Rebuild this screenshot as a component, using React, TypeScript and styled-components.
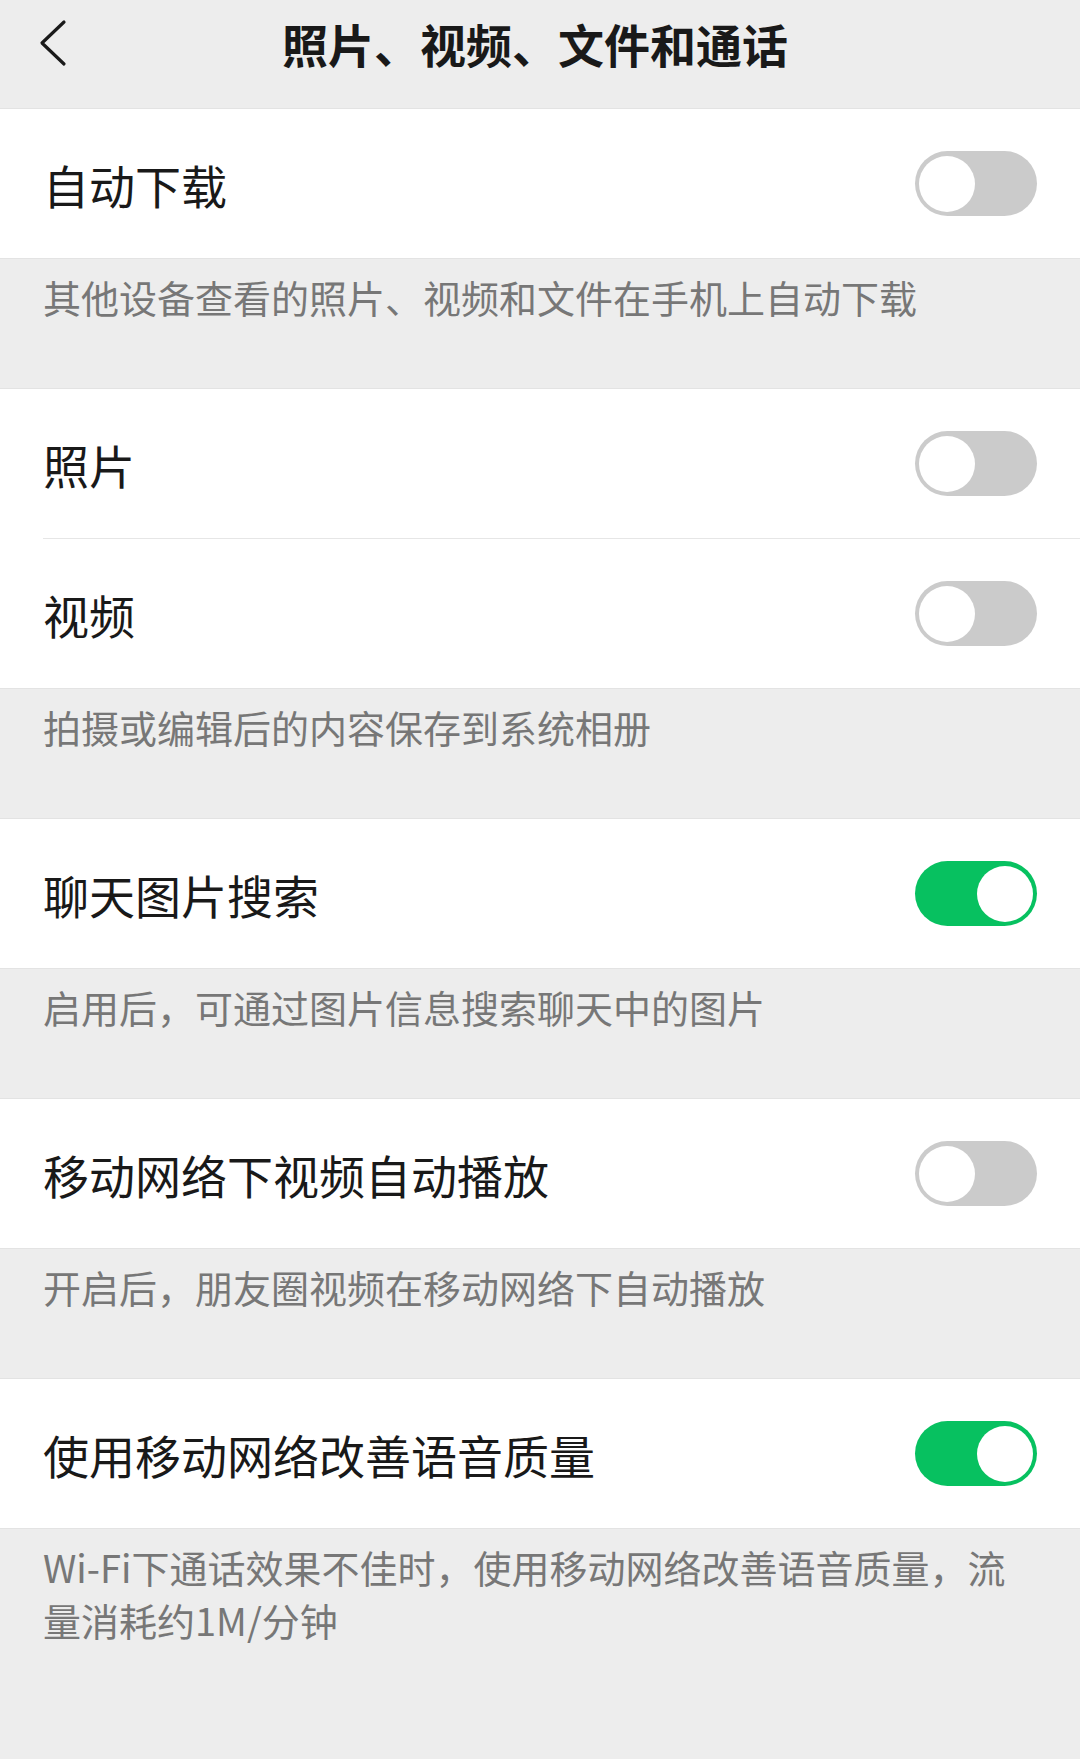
import { useState } from 'react'

import styled, { createGlobalStyle } from 'styled-components'

type iSetting = {
  id: string
  label: string
  on: boolean
}

type iSection = {
  settings: iSetting[]
  note: string
}

const sections: iSection[] = [
  {
    settings: [{ id: 'auto', label: '自动下载', on: false }],
    note: '其他设备查看的照片、视频和文件在手机上自动下载'
  },
  {
    settings: [
      { id: 'photo', label: '照片', on: false },
      { id: 'video', label: '视频', on: false }
    ],
    note: '拍摄或编辑后的内容保存到系统相册'
  },
  {
    settings: [{ id: 'search', label: '聊天图片搜索', on: true }],
    note: '启用后，可通过图片信息搜索聊天中的图片'
  },
  {
    settings: [{ id: 'autoplay', label: '移动网络下视频自动播放', on: false }],
    note: '开启后，朋友圈视频在移动网络下自动播放'
  },
  {
    settings: [{ id: 'voice', label: '使用移动网络改善语音质量', on: true }],
    note: 'Wi-Fi下通话效果不佳时，使用移动网络改善语音质量，流量消耗约1M/分钟'
  }
]

const App = () => {
  const [values, setValues] = useState<Record<string, boolean>>(() =>
    Object.fromEntries(sections.flatMap(s => s.settings.map(item => [item.id, item.on])))
  )

  const toggle = (id: string) => setValues(prev => ({ ...prev, [id]: !prev[id] }))

  return (
    <Page>
      <GlobalStyle />
      <Header>
        <BackButton aria-label="返回">
          <svg width="30" height="48" viewBox="0 0 30 48" fill="none">
            <path
              d="M26 3 L4 24 L26 45"
              stroke="#1a1a1a"
              strokeWidth="3.2"
              strokeLinecap="round"
              strokeLinejoin="round"
            />
          </svg>
        </BackButton>
        <Title>照片、视频、文件和通话</Title>
      </Header>

      {sections.map((section, i) => (
        <div key={i}>
          <Group>
            {section.settings.map((item, j) => (
              <Row key={item.id} $divided={j > 0}>
                <Label>{item.label}</Label>
                <Switch
                  role="switch"
                  aria-checked={values[item.id]}
                  $on={values[item.id]}
                  onClick={() => toggle(item.id)}
                >
                  <Knob $on={values[item.id]} />
                </Switch>
              </Row>
            ))}
          </Group>
          <Note $last={i === sections.length - 1}>{section.note}</Note>
        </div>
      ))}
    </Page>
  )
}

export default App

const GlobalStyle = createGlobalStyle`
  html, body {
    margin: 0;
    padding: 0;
    background: #ededed;
  }
  body {
    font-family: "Noto Sans CJK SC", "Noto Sans", sans-serif;
  }
`
const Page = styled.div({
  width: 1080,
  minHeight: 1759,
  background: '#ededed',
  display: 'flex',
  flexDirection: 'column'
})
const Header = styled.header({
  height: 108,
  boxSizing: 'border-box',
  paddingBottom: 22,
  display: 'grid',
  gridTemplateColumns: '120px 1fr 120px',
  alignItems: 'center'
})
const BackButton = styled.button({
  background: 'none',
  border: 'none',
  padding: '0 0 0 38px',
  display: 'flex',
  alignItems: 'center',
  cursor: 'pointer'
})
const Title = styled.h1({
  margin: 0,
  paddingRight: 10,
  textAlign: 'center',
  fontSize: 46,
  fontWeight: 600,
  color: '#191919',
  lineHeight: '60px',
  letterSpacing: 0
})
const Group = styled.div({
  background: '#fff',
  borderTop: '1px solid #e3e3e3',
  borderBottom: '1px solid #e3e3e3'
})
const Row = styled.div<{ $divided: boolean }>`
  height: 149px;
  box-sizing: content-box;
  margin-left: 43px;
  padding-right: 43px;
  display: flex;
  align-items: center;
  justify-content: space-between;
  border-top: ${p => (p.$divided ? '1px solid #e6e6e6' : 'none')};
`
const Label = styled.span({
  fontSize: 46,
  color: '#191919'
})
const Switch = styled.button<{ $on: boolean }>`
  position: relative;
  width: 122px;
  height: 65px;
  padding: 0;
  border: none;
  border-radius: 33px;
  background: ${p => (p.$on ? '#07c160' : '#cbcbcb')};
  cursor: pointer;
  flex-shrink: 0;
`
const Knob = styled.span<{ $on: boolean }>`
  position: absolute;
  top: 4.5px;
  left: ${p => (p.$on ? '62px' : '4px')};
  width: 56px;
  height: 56px;
  border-radius: 50%;
  background: #fff;
  transition: left 0.2s ease;
`
const Note = styled.p<{ $last: boolean }>`
  margin: 0;
  box-sizing: border-box;
  min-height: ${p => (p.$last ? '230px' : '129px')};
  padding: 11px 45px 0 43px;
  font-size: 38px;
  line-height: 53px;
  color: #777;
`
